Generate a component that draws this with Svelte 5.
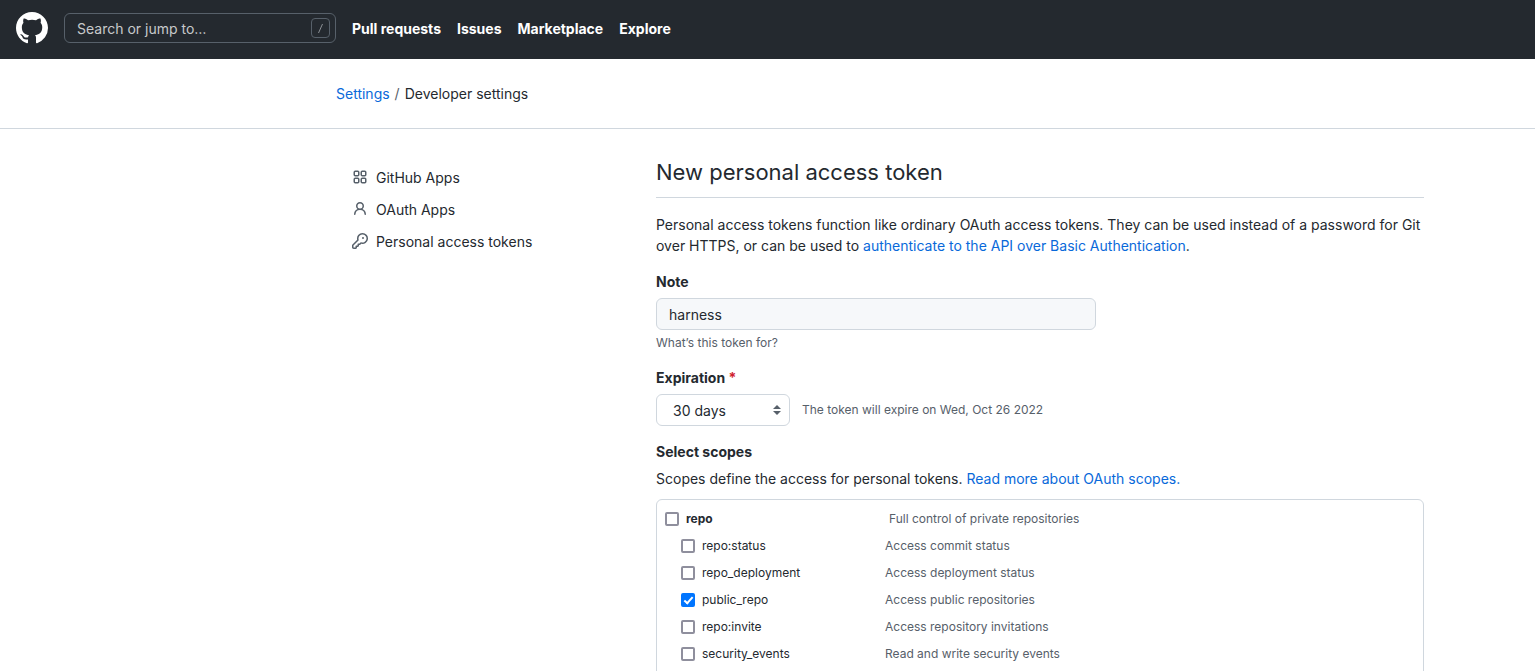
<script>
  const links = ['Pull requests', 'Issues', 'Marketplace', 'Explore'];
  const periods = ['7 days', '30 days', '60 days', '90 days'];

  let note = $state('harness');
  let period = $state('30 days');
  let scopes = $state([
    { name: 'repo', about: 'Full control of private repositories', parent: true, on: false },
    { name: 'repo:status', about: 'Access commit status', on: false },
    { name: 'repo_deployment', about: 'Access deployment status', on: false },
    { name: 'public_repo', about: 'Access public repositories', on: true },
    { name: 'repo:invite', about: 'Access repository invitations', on: false },
    { name: 'security_events', about: 'Read and write security events', on: false }
  ]);
</script>

<header class="topbar">
  <a class="logo" href="#home" aria-label="GitHub">
    <svg width="32" height="32" viewBox="0 0 16 16" fill="currentColor" aria-hidden="true">
      <path d="M8 0C3.58 0 0 3.58 0 8c0 3.54 2.29 6.53 5.47 7.59.4.07.55-.17.55-.38 0-.19-.01-.82-.01-1.49-2.01.37-2.53-.49-2.69-.94-.09-.23-.48-.94-.82-1.13-.28-.15-.68-.52-.01-.53.63-.01 1.08.58 1.23.82.72 1.21 1.87.87 2.33.66.07-.52.28-.87.51-1.07-1.78-.2-3.64-.89-3.64-3.95 0-.87.31-1.59.82-2.15-.08-.2-.36-1.02.08-2.12 0 0 .67-.21 2.2.82.64-.18 1.32-.27 2-.27.68 0 1.36.09 2 .27 1.53-1.04 2.2-.82 2.2-.82.44 1.1.16 1.92.08 2.12.51.56.82 1.27.82 2.15 0 3.07-1.87 3.75-3.65 3.95.29.25.54.73.54 1.48 0 1.07-.01 1.93-.01 2.2 0 .21.15.46.55.38A8.013 8.013 0 0016 8c0-4.42-3.58-8-8-8z" />
    </svg>
  </a>
  <label class="search">
    <input type="text" placeholder="Search or jump to…" aria-label="Search or jump to" />
    <svg width="19" height="20" viewBox="0 0 19 20" fill="none" stroke="#57606a" aria-hidden="true">
      <rect x="0.5" y="0.5" width="18" height="19" rx="3.5" />
      <path d="M11.5 6l-4 9" stroke="#8b8f94" />
    </svg>
  </label>
  <nav class="links">
    {#each links as link}
      <a href="#nav">{link}</a>
    {/each}
  </nav>
</header>

<div class="crumbs">
  <a href="#settings">Settings</a>
  <span class="slash">/</span>
  <span>Developer settings</span>
</div>

<div class="layout">
  <nav class="side">
    <a href="#apps">
      <svg width="16" height="16" viewBox="0 0 16 16" fill="none" stroke="currentColor" stroke-width="1.5" aria-hidden="true">
        <rect x="2.25" y="2.25" width="4.5" height="4.5" rx="1" />
        <rect x="9.25" y="2.25" width="4.5" height="4.5" rx="1" />
        <rect x="2.25" y="9.25" width="4.5" height="4.5" rx="1" />
        <rect x="9.25" y="9.25" width="4.5" height="4.5" rx="1" />
      </svg>
      GitHub Apps
    </a>
    <a href="#oauth">
      <svg width="16" height="16" viewBox="0 0 16 16" fill="currentColor" aria-hidden="true">
        <path d="M10.5 5a2.5 2.5 0 11-5 0 2.5 2.5 0 015 0zm.061 3.073a4 4 0 10-5.123 0 6.004 6.004 0 00-3.431 5.142.75.75 0 001.498.07 4.5 4.5 0 018.99 0 .75.75 0 101.498-.07 6.005 6.005 0 00-3.432-5.142z" />
      </svg>
      OAuth Apps
    </a>
    <a href="#tokens">
      <svg width="16" height="16" viewBox="0 0 16 16" fill="currentColor" aria-hidden="true">
        <path d="M6.5 5.5a4 4 0 112.731 3.795.75.75 0 00-.768.18L7.44 10.5H6.25a.75.75 0 00-.75.75v1.19l-.06.06H4.25a.75.75 0 00-.75.75v1.19l-.06.06H1.75a.25.25 0 01-.25-.25v-1.69l5.024-5.023a.75.75 0 00.181-.768A3.995 3.995 0 016.5 5.5zm4-5.5a5.5 5.5 0 00-5.348 6.788L.22 11.72a.75.75 0 00-.22.53v2C0 15.216.784 16 1.75 16h2a.75.75 0 00.53-.22l.5-.5a.75.75 0 00.22-.53V14h.75a.75.75 0 00.53-.22l.5-.5a.75.75 0 00.22-.53V12h.75a.75.75 0 00.53-.22l.932-.932A5.5 5.5 0 1010.5 0zm.5 6a1 1 0 100-2 1 1 0 000 2z" />
      </svg>
      Personal access tokens
    </a>
  </nav>

  <main>
    <h1>New personal access token</h1>
    <p class="intro">
      Personal access tokens function like ordinary OAuth access tokens. They can be used instead of a
      password for Git over HTTPS, or can be used to
      <a href="#auth">authenticate to the API over Basic Authentication</a>.
    </p>

    <div class="field">
      <label class="title" for="note">Note</label>
      <input class="note" id="note" type="text" bind:value={note} />
      <p class="hint">What’s this token for?</p>
    </div>

    <div class="field">
      <label class="title" for="period">Expiration <span class="star">*</span></label>
      <div class="expiry">
        <div class="picker">
          <select id="period" bind:value={period}>
            {#each periods as option}
              <option>{option}</option>
            {/each}
          </select>
          <svg width="8" height="10" viewBox="0 0 8 10" fill="#57606a" aria-hidden="true">
            <path d="M4 0l4 4H0zM4 10l4-4H0z" />
          </svg>
        </div>
        <span class="small">The token will expire on Wed, Oct 26 2022</span>
      </div>
    </div>

    <h2 class="title">Select scopes</h2>
    <p class="scopes-about">
      Scopes define the access for personal tokens. <a href="#scopes">Read more about OAuth scopes.</a>
    </p>

    <ul class="scopes">
      {#each scopes as scope}
        <li class:parent={scope.parent}>
          <label>
            <input type="checkbox" bind:checked={scope.on} />
            {scope.name}
          </label>
          <span class="about">{scope.about}</span>
        </li>
      {/each}
    </ul>
  </main>
</div>

<style>
  :global(body) {
    background: #fff;
    color: #24292f;
    font: 14px/21px Inter, "Liberation Sans", sans-serif;
  }

  a {
    color: #0969da;
    text-decoration: none;
  }

  h1, h2, p, ul {
    margin: 0;
    padding: 0;
  }

  input, select {
    box-sizing: border-box;
    margin: 0;
    color: inherit;
    font: inherit;
  }

  svg {
    display: block;
    flex: none;
  }

  .topbar {
    display: flex;
    align-items: center;
    gap: 16px;
    padding: 12px 16px 15px;
    background: #24292f;
  }

  .logo {
    color: #fff;
  }

  .search {
    display: flex;
    align-items: center;
    box-sizing: border-box;
    width: 272px;
    height: 30px;
    padding: 0 5px 0 12px;
    border: 1px solid #57606a;
    border-radius: 6px;
  }

  .search input {
    flex: 1;
    min-width: 0;
    padding: 0;
    border: 0;
    outline: 0;
    background: none;
    color: #fff;
  }

  .search input::placeholder {
    color: #c8c9cb;
    opacity: 1;
  }

  .links {
    display: flex;
    gap: 16px;
  }

  .links a {
    color: #fff;
    font-weight: 700;
  }

  .crumbs {
    display: flex;
    gap: 5px;
    padding: 24px 111px 24px 336px;
    border-bottom: 1px solid #d0d7de;
  }

  .slash {
    color: #57606a;
  }

  .layout {
    display: grid;
    grid-template-columns: 296px minmax(0, 1fr);
    gap: 24px;
    padding: 24px 111px 40px 336px;
  }

  .side {
    display: flex;
    flex-direction: column;
    padding: 8px 16px;
  }

  .side a {
    display: flex;
    align-items: center;
    gap: 8px;
    height: 32px;
    color: #24292f;
  }

  .side svg {
    color: #57606a;
  }

  h1 {
    margin-bottom: 16px;
    padding-bottom: 6px;
    border-bottom: 1px solid #d0d7de;
    font-size: 22px;
    line-height: 38px;
    font-weight: 400;
  }

  .intro {
    margin-bottom: 15px;
  }

  .title {
    display: block;
    margin-bottom: 6px;
    font-size: 14px;
    font-weight: 700;
  }

  .field {
    margin-bottom: 15px;
  }

  .note {
    display: block;
    width: 440px;
    max-width: 100%;
    height: 32px;
    padding: 0 12px;
    border: 1px solid #d0d7de;
    border-radius: 6px;
    background: #f6f8fa;
  }

  .hint, .small {
    color: #57606a;
    font-size: 12px;
    line-height: 18px;
  }

  .hint {
    padding-top: 4px;
  }

  .star {
    color: #cf222e;
  }

  .expiry {
    display: flex;
    align-items: center;
    gap: 12px;
  }

  .picker {
    display: grid;
    align-items: center;
    width: 134px;
  }

  .picker > * {
    grid-area: 1 / 1;
  }

  .picker svg {
    justify-self: end;
    margin-right: 9px;
    pointer-events: none;
  }

  select {
    appearance: none;
    height: 32px;
    padding: 0 24px 0 16px;
    border: 1px solid #d0d7de;
    border-radius: 6px;
    background: #fff;
  }

  .scopes-about {
    margin-bottom: 10px;
  }

  .scopes {
    padding: 5px 8px 16px;
    border: 1px solid #d0d7de;
    border-radius: 6px;
    list-style: none;
    font-size: 12px;
    line-height: 27px;
  }

  .scopes li {
    display: grid;
    grid-template-columns: 204px 1fr;
    padding-left: 16px;
  }

  .scopes .parent {
    grid-template-columns: 224px 1fr;
    padding-left: 0;
  }

  .scopes label {
    display: flex;
    align-items: center;
    gap: 7px;
  }

  .parent label {
    font-weight: 700;
  }

  .scopes input {
    display: grid;
    place-items: center;
    appearance: none;
    width: 14px;
    height: 14px;
    border: 2px solid #8f8f9d;
    border-radius: 2px;
    background: #fff;
  }

  .scopes input:checked {
    border-color: #0075ff;
    background: #0075ff;
  }

  .scopes input:checked::after {
    content: "";
    width: 3px;
    height: 7px;
    margin-bottom: 2px;
    border: solid #fff;
    border-width: 0 2px 2px 0;
    transform: rotate(42deg);
  }

  .about {
    color: #57606a;
  }

  @media (max-width: 1200px) {
    .crumbs, .layout {
      padding-left: 24px;
      padding-right: 24px;
    }
  }
</style>
